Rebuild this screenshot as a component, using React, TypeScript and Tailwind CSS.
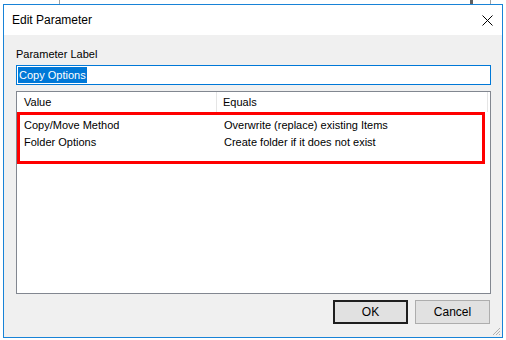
const rows = [
  { value: "Copy/Move Method", equals: "Overwrite (replace) existing Items" },
  { value: "Folder Options", equals: "Create folder if it does not exist" },
];

export default function App() {
  return (
    <div className="relative h-[340px] w-[506px] overflow-hidden bg-white pl-[3px] pt-[4px] font-['Liberation_Sans',Arial,sans-serif] text-[11px] text-black">
      {/* bits of the window behind */}
      <div className="absolute left-[59px] top-0 h-[4px] w-px bg-[#a0a0a0]" />
      <div className="absolute left-[470px] top-0 h-[4px] w-[3px] bg-[#606060]" />
      <div className="absolute left-[490px] top-0 h-[4px] w-px bg-[#a0a0a0]" />

      <div className="flex h-[334px] w-[500px] flex-col border border-[#1883d7] bg-[#f0f0f0]">
        <div className="flex h-[30px] items-center justify-between bg-white pl-[8px] pr-[9px]">
          <span className="text-[12px]">Edit Parameter</span>
          <svg width="11" height="11" viewBox="0 0 11 11">
            <path d="M0.5 0.5 L10.5 10.5 M10.5 0.5 L0.5 10.5" stroke="#000" strokeWidth="1" />
          </svg>
        </div>

        <div className="flex flex-1 flex-col pl-[12px] pr-[11px]">
          <div className="mt-[12px] h-[14px] leading-[14px]">Parameter Label</div>
          <div className="mt-[4px] flex h-[20px] items-center border border-[#0078d7] bg-white px-px">
            <span className="bg-[#0078d7] px-px leading-[16px] text-white">Copy Options</span>
          </div>

          <div className="mt-[6px] flex h-[203px] flex-col border border-[#828790] bg-white">
            <div className="flex h-[20px] items-center">
              <div className="w-[200px] border-r border-[#e5e5e5] pl-[7px] leading-[20px]">Value</div>
              <div className="flex-1 border-r border-[#e5e5e5] pl-[6px] leading-[20px]">Equals</div>
              <div className="w-[2px]" />
            </div>
            <div className="mr-[5px] border-[3px] border-[#ff0000] pb-[10px] pt-[2px]">
              {rows.map((r) => (
                <div key={r.value} className="flex h-[17px] items-center">
                  <div className="w-[204px] pl-[4px]">{r.value}</div>
                  <div>{r.equals}</div>
                </div>
              ))}
            </div>
          </div>

          <div className="mt-[6px] flex justify-end gap-[7px] pr-px">
            <button className="h-[24px] w-[75px] border-2 border-[#1e1e1e] bg-[#e1e1e1] text-[12px]">
              OK
            </button>
            <button className="h-[24px] w-[75px] border border-[#adadad] bg-[#e1e1e1] text-[12px]">
              Cancel
            </button>
          </div>
          <div className="flex flex-1 items-end justify-end">
            <svg width="10" height="10" viewBox="0 0 10 10" className="-mr-[10px] mb-px">
              <path d="M9 2 L2 9 M9 5 L5 9 M9 8 L8 9" stroke="#b0b0b0" strokeWidth="1" />
            </svg>
          </div>
        </div>
      </div>
    </div>
  );
}
